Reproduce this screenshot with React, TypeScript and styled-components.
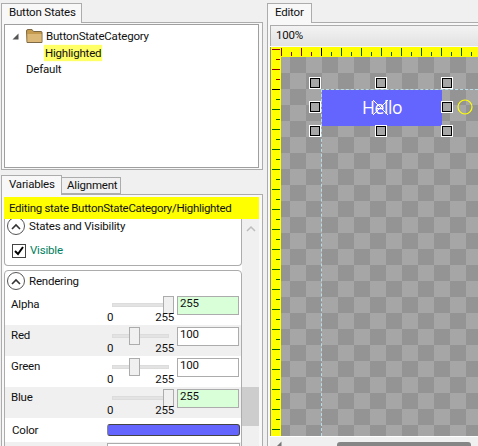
import React from "react";
import styled, { createGlobalStyle } from "styled-components";

const Global = createGlobalStyle`
  html, body { margin: 0; padding: 0; background: #f0f0f0; }
  * { box-sizing: border-box; }
  body { font-family: Roboto, "Noto Sans", sans-serif; font-size: 11.5px; letter-spacing: -0.2px; color: #111; }
`;

const Root = styled.div`
  width: 478px; height: 446px; overflow: hidden; display: flex; background: #f0f0f0;
`;
const LeftPane = styled.div`
  width: 266px; flex: none; padding: 3px 0 0 1px; display: flex; flex-direction: column;
`;
const RightPane = styled.div`
  flex: 1; min-width: 0; padding: 3px 0 0 1px; display: flex; flex-direction: column;
`;
const TabStrip = styled.div`
  display: flex; align-items: flex-end; height: 19px; flex: none; position: relative; z-index: 1;
`;
const Tab = styled.div<{ $active?: boolean; $width: number }>`
  width: ${p => p.$width}px;
  height: ${p => (p.$active ? 20 : 17)}px;
  margin-bottom: ${p => (p.$active ? -1 : 0)}px;
  background: ${p => (p.$active ? "#f8f8f8" : "#f0f0f0")};
  border: 1px solid #acacac;
  border-bottom: ${p => (p.$active ? "none" : "1px solid #acacac")};
  margin-left: ${p => (p.$active ? 0 : -1)}px;
  padding: ${p => (p.$active ? "1px 0 0 7px" : "0 0 0 5px")};
  line-height: 14px; white-space: nowrap;
`;
const TabPanel = styled.div<{ $height?: number }>`
  width: 262px; border: 1px solid #acacac; background: #f8f8f8;
  ${p => (p.$height ? `height: ${p.$height}px; flex: none;` : "flex: 1; min-height: 0;")}
  padding: 1px 2px;
`;
const TreeBox = styled.div`
  height: 144px; border: 1px solid #9f9f9f; background: #fff; padding: 2px 0 0 7px;
  margin-right: 1px;
`;
const TreeRow = styled.div<{ $indent?: number; $tight?: boolean }>`
  display: flex; align-items: center; height: 17px; padding-left: ${p => p.$indent || 0}px;
  margin-top: ${p => (p.$tight ? -1 : 0)}px;
`;
const TreeLabel = styled.span`
  margin-left: 3px;
`;
const Highlight = styled.span`
  background: #ffff66; padding: 0 1px; height: 16px; line-height: 16px; box-shadow: 0 0 1px #ffff66;
`;
const Gap = styled.div`
  height: 6px; flex: none;
`;

const SecondTabs = styled(TabStrip)`
  height: 18px;
`;
const VarPanel = styled.div`
  flex: 1; min-height: 0; width: 262px; border: 1px solid #acacac; border-bottom: none; background: #f8f8f8;
  padding: 2px 2px 0; display: flex; flex-direction: column;
`;
const Banner = styled.div`
  height: 22px; flex: none; background: #ffff00; padding-left: 5px; line-height: 22px; margin-right: 1px;
  position: relative; z-index: 1; letter-spacing: -0.31px;
`;
const ScrollArea = styled.div`
  flex: 1; min-height: 0; display: flex; background: #fff; margin-right: 1px;
`;
const Groups = styled.div`
  width: 238px; flex: none; background: #fff;
`;
const VScroll = styled.div`
  width: 17px; flex: none; background: #f0f0f0; position: relative; padding-top: 6px; display: flex; justify-content: center;
`;
const VThumb = styled.div`
  position: absolute; left: 0; right: 0; top: 168px; height: 39px; background: #cdcdcd;
`;
const Group = styled.div<{ $open?: boolean }>`
  border: 1px solid #acacac; border-radius: 4px; background: #fff;
  ${p => (p.$open ? "border-top: none; border-radius: 0 0 4px 4px; height: 49px; margin-bottom: 4px;" : "padding-top: 2px;")}
`;
const GroupHead = styled.div<{ $clipped?: boolean }>`
  display: flex; align-items: center; height: 18px; gap: 4px; padding-left: 2px;
  margin-top: ${p => (p.$clipped ? -2 : -1)}px;
`;
const Toggle = styled.div`
  width: 18px; height: 18px; border: 1px solid #555; border-radius: 50%; background: #fff; flex: none;
  display: flex; align-items: center; justify-content: center;
`;
const CheckRow = styled.div`
  display: flex; align-items: center; gap: 4px; padding: 9px 0 0 7px;
`;
const CheckBox = styled.div`
  width: 14px; height: 14px; border: 1px solid #444; background: #fff; display: flex; align-items: center; justify-content: center;
`;
const Green = styled.span`
  color: #008060; margin-top: -3px;
`;
const RowsWrap = styled.div`
  padding-top: 4px;
`;
const Row = styled.div<{ $alt?: boolean }>`
  height: 31px; display: flex; background: ${p => (p.$alt ? "#f0f0f0" : "#fff")};
`;
const RowLabel = styled.div`
  width: 102px; flex: none; padding: 2px 0 0 6px; line-height: 16px;
`;
const Slider = styled.div`
  width: 67px; height: 31px; flex: none; position: relative;
`;
const Track = styled.div`
  position: absolute; left: 5px; top: 9px; width: 57px; height: 4px; background: #e3e3e3; border: 1px solid #dcdcdc;
`;
const Thumb = styled.div`
  position: absolute; top: 2px; width: 11px; height: 18px; background: #f0f0f0; border: 1px solid #acacac;
`;
const Tick = styled.span<{ $right?: boolean }>`
  position: absolute; top: 16px; line-height: 15px; ${p => (p.$right ? "right: 0;" : "left: 0;")}
`;
const Field = styled.div<{ $changed?: boolean }>`
  width: 62px; height: 19px; margin: 2px 0 0 3px; flex: none; border: 1px solid #acacac;
  background: ${p => (p.$changed ? "#d9ffd9" : "#fff")}; padding-left: 2px; line-height: 12px;
`;
const ColorRow = styled.div`
  height: 24px; display: flex; align-items: center; background: #fff;
`;
const ColorLabel = styled.div`
  width: 102px; flex: none; padding-left: 7px;
`;
const ColorBar = styled.div`
  width: 133px; height: 12px; background: #6464ff; border: 1px solid #444; border-left-color: #888; border-radius: 3px;
`;
const TailRow = styled.div`
  height: 10px; background: #f0f0f0; padding: 1px 0 0 102px;
`;
const TailBox = styled.div`
  width: 133px; height: 9px; border: 1px solid #acacac; background: #fff;
`;

const EditorPanel = styled.div`
  flex: 1; min-height: 0; border: 1px solid #acacac; border-right: none; border-bottom: none; background: #f8f8f8;
  padding: 2px 0 0 2px; display: flex; flex-direction: column;
`;
const Toolbar = styled.div`
  height: 21px; flex: none; background: linear-gradient(#f3f3f3, #e2e2e2); border-top: 1px solid #acacac; border-left: 1px solid #acacac;
  padding-left: 5px; line-height: 19px;
`;
const Ruled = styled.div`
  height: 389px; flex: none; display: grid; grid-template-columns: 10px 1fr; grid-template-rows: 10px 1fr; background: #ffff00;
  border-left: 1px solid #8a8a8a; margin-top: 1px; overflow: hidden;
`;
const TopBar = styled.div`
  background: #ffff00; grid-column: 1 / 3; height: 10px; overflow: hidden;
`;
const SideRuler = styled.div`
  background: #ffff00; overflow: hidden;
`;
const Canvas = styled.div`
  position: relative; overflow: hidden;
  background-color: #a6a6a6;
  background-image: conic-gradient(#949494 25%, #a6a6a6 0 50%, #949494 0 75%, #a6a6a6 0);
  background-size: 32px 32px;
  background-position: -7px 0;
`;
const GuideH = styled.div`
  position: absolute; left: 40px; right: 0; top: 32px; border-top: 1px dashed #b8dce8;
`;
const GuideV = styled.div`
  position: absolute; top: 32px; bottom: 0; left: 40px; border-left: 1px dashed #b8dce8;
`;
const Blue = styled.div`
  position: absolute; left: 41px; top: 33px; width: 120px; height: 36px; background: #6464ff; color: #fff;
  font-size: 17.5px; line-height: 34px; text-align: center; font-family: "Open Sans", Roboto, sans-serif; letter-spacing: -0.4px;
`;
const Handle = styled.div<{ $x: number; $y: number }>`
  position: absolute; left: ${p => p.$x}px; top: ${p => p.$y}px; width: 10px; height: 10px;
  background: #a6a6a6; border: 1px solid #000;
  box-shadow: 0 0 0 1px #fff;
`;
const Overlay = styled.svg`
  position: absolute; left: 0; top: 0;
`;
const HScroll = styled.div`
  height: 10px; flex: none; background: #f0f0f0; border-top: 1px solid #fff; position: relative; display: flex; padding: 4px 0 0 5px;
`;
const HThumb = styled.div`
  position: absolute; left: 67px; top: 5px; width: 134px; height: 8px; background: #868686; border-radius: 3px 3px 0 0;
`;

const tickColor = (d: number) => (d < 0 ? "#8b0000" : d === 0 ? "#000" : "#006400");

const TopRuler = () => {
  const t = [];
  for (let i = 0; i < 21; i++) {
    const x = 10.5 + i * 10;
    t.push(<line key={i} x1={x} x2={x} y1={i % 2 ? 5 : 1} y2={9} stroke={tickColor(i - 4)} />);
  }
  return (
    <svg width="208" height="10" style={{ display: "block" }}>
      <line x1={1} x2={9} y1={2.5} y2={2.5} stroke="#8b0000" />
      {t}
    </svg>
  );
};

const LeftRuler = () => {
  const t = [];
  for (let i = 0; i < 38; i++) {
    const y = 2.5 + i * 10;
    t.push(<line key={i} x1={i % 2 ? 1 : 5} x2={9} y1={y} y2={y} stroke={tickColor(i - 3)} />);
  }
  return (
    <svg width="10" height="380" style={{ display: "block" }}>
      {t}
    </svg>
  );
};

const Chevron = () => (
  <svg width="10" height="7" viewBox="0 0 10 7">
    <path d="M1 6 L5 2 L9 6" fill="none" stroke="#333" strokeWidth="1.6" />
  </svg>
);

const SliderCell = ({ value }: { value: number }) => (
  <Slider>
    <Track />
    <Thumb style={{ left: Math.round(value * 0.22) }} />
    <Tick>0</Tick>
    <Tick $right>255</Tick>
  </Slider>
);

const channels = [
  { name: "Alpha", value: 255, changed: true },
  { name: "Red", value: 100 },
  { name: "Green", value: 100 },
  { name: "Blue", value: 255, changed: true },
];

const handles = [
  [29, 21], [95, 21], [161, 21],
  [29, 45], [161, 45],
  [29, 69], [95, 69], [161, 69],
];

export default function App() {
  return (
    <Root>
      <Global />
      <LeftPane>
        <TabStrip>
          <Tab $active $width={81}>Button States</Tab>
        </TabStrip>
        <TabPanel $height={148}>
          <TreeBox>
            <TreeRow>
              <svg width="14" height="16" viewBox="0 0 14 16" style={{ flex: "none" }}>
                <path d="M0.5 11.5 L6.5 11.5 L6.5 5.5 Z" fill="#555" />
              </svg>
              <svg width="17" height="16" viewBox="0 0 17 16" style={{ flex: "none" }}>
                <path d="M0.5 3 Q0.5 1.5 2 1.5 L6 1.5 L7.5 3.5 L15 3.5 Q16 3.5 16 4.5 L16 14.5 L1 14.5 Z" fill="#c49a4e" stroke="#7d6a45" />
                <rect x="1.5" y="6" width="14" height="8" fill="#dcb876" />
              </svg>
              <TreeLabel>ButtonStateCategory</TreeLabel>
            </TreeRow>
            <TreeRow $indent={32}>
              <Highlight>Highlighted</Highlight>
            </TreeRow>
            <TreeRow $indent={14} $tight>Default</TreeRow>
          </TreeBox>
        </TabPanel>
        <Gap />
        <SecondTabs>
          <Tab $active $width={61}>Variables</Tab>
          <Tab $width={60}>Alignment</Tab>
        </SecondTabs>
        <VarPanel>
          <Banner>Editing state ButtonStateCategory/Highlighted</Banner>
          <ScrollArea>
            <Groups>
              <Group $open>
                <GroupHead $clipped>
                  <Toggle><Chevron /></Toggle>
                  States and Visibility
                </GroupHead>
                <CheckRow>
                  <CheckBox>
                    <svg width="12" height="12" viewBox="0 0 12 12">
                      <path d="M2 6 L5 9 L10 2" fill="none" stroke="#000" strokeWidth="2" />
                    </svg>
                  </CheckBox>
                  <Green>Visible</Green>
                </CheckRow>
              </Group>
              <Group>
                <GroupHead>
                  <Toggle><Chevron /></Toggle>
                  Rendering
                </GroupHead>
                <RowsWrap>
                  {channels.map((c, i) => (
                    <Row key={c.name} $alt={i % 2 === 1}>
                      <RowLabel>{c.name}</RowLabel>
                      <SliderCell value={c.value} />
                      <Field $changed={c.changed}>{c.value}</Field>
                    </Row>
                  ))}
                  <ColorRow>
                    <ColorLabel>Color</ColorLabel>
                    <ColorBar />
                  </ColorRow>
                  <TailRow><TailBox /></TailRow>
                </RowsWrap>
              </Group>
            </Groups>
            <VScroll>
              <svg width="10" height="7" viewBox="0 0 10 7">
                <path d="M1 6 L5 2 L9 6" fill="none" stroke="#bdbdbd" strokeWidth="1.5" />
              </svg>
              <VThumb />
            </VScroll>
          </ScrollArea>
        </VarPanel>
      </LeftPane>
      <RightPane>
        <TabStrip>
          <Tab $active $width={45}>Editor</Tab>
        </TabStrip>
        <EditorPanel>
          <Toolbar>100%</Toolbar>
          <Ruled>
            <TopBar><TopRuler /></TopBar>
            <SideRuler><LeftRuler /></SideRuler>
            <Canvas>
              <GuideH />
              <GuideV />
              <Blue>Hello</Blue>
              {handles.map(([x, y]) => (
                <Handle key={`${x}-${y}`} $x={x} $y={y} />
              ))}
              <Overlay width="197" height="100">
                <path d="M92 43 L107 58 M107 43 L92 58" stroke="#fff" strokeWidth="1" fill="none" />
                <circle cx="184" cy="50" r="7" fill="none" stroke="#ffff00" strokeWidth="1.2" />
              </Overlay>
            </Canvas>
          </Ruled>
          <HScroll>
            <svg width="7" height="7" viewBox="0 0 7 7">
              <path d="M6.5 0.5 L6.5 6.5 L0.5 6.5 Z" fill="#777" />
            </svg>
            <HThumb />
          </HScroll>
        </EditorPanel>
      </RightPane>
    </Root>
  );
}
